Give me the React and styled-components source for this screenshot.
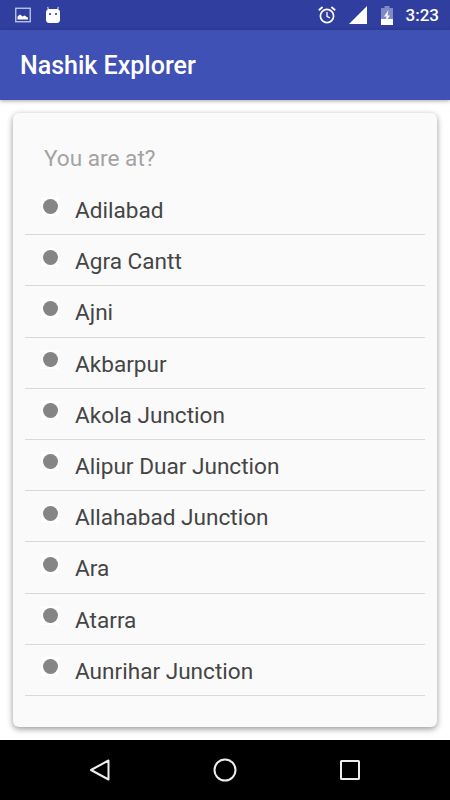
import React from "react";
import styled, { createGlobalStyle } from "styled-components";

const STATIONS = [
  "Adilabad",
  "Agra Cantt",
  "Ajni",
  "Akbarpur",
  "Akola Junction",
  "Alipur Duar Junction",
  "Allahabad Junction",
  "Ara",
  "Atarra",
  "Aunrihar Junction",
];

const App = () => (
  <Screen>
    <GlobalStyle />
    <StatusBar>
      <StatusGroup>
        <svg width="16" height="16" viewBox="0 0 16 16">
          <rect x="0.75" y="1.25" width="14.5" height="13.5" fill="none" stroke="#c5cae9" strokeWidth="1.3" />
          <path d="M2.5 12.5V9.5l2.5-2 2.5 2 2-1 3.5 2.2v1.8z" fill="#fff" />
        </svg>
        <svg width="16" height="18" viewBox="0 0 16 18">
          <path d="M3.5 4L2.7 0.8M12.5 4l.8-3.2" stroke="#c5cae9" strokeWidth="1.2" fill="none" />
          <rect x="1" y="3" width="14" height="14" rx="3.5" fill="#fff" />
          <circle cx="5" cy="8" r="1.1" fill="#303f9f" />
          <circle cx="11" cy="8" r="1.1" fill="#303f9f" />
        </svg>
      </StatusGroup>
      <StatusGroup $right>
        <svg width="20" height="20" viewBox="-1 0 20 20" fill="none" stroke="#fff">
          <circle cx="10" cy="11" r="6.6" strokeWidth="1.7" />
          <path d="M10 7v4.4l3 1.6" strokeWidth="1.3" />
          <path d="M1.8 5.2l3.8-3.2M18.2 5.2l-3.8-3.2" strokeWidth="1.8" />
        </svg>
        <svg width="20" height="20" viewBox="0 0 20 20">
          <path d="M19 1v18H1z" fill="#fff" />
        </svg>
        <svg width="14" height="20" viewBox="0 0 14 20">
          <path d="M1 3h3.5V1h5v2H13v17H1z" fill="#7f89c6" />
          <path d="M1 14h12v6H1z" fill="#fff" />
          <path d="M8.6 5L4 11.5h2.6L5.4 17 10 10.4H7.4z" fill="#fff" />
        </svg>
        <Clock>3:23</Clock>
      </StatusGroup>
    </StatusBar>
    <AppBar>Nashik Explorer</AppBar>
    <Content>
      <Card>
        <Prompt>You are at?</Prompt>
        <StationList>
          {STATIONS.map(name => (
            <StationRow key={name}>
              <DotBox>
                <Dot />
              </DotBox>
              <StationName>{name}</StationName>
            </StationRow>
          ))}
        </StationList>
      </Card>
    </Content>
    <NavBar>
      <svg width="22" height="24" viewBox="0 0 22 24" fill="none" stroke="#eee" strokeWidth="2" strokeLinejoin="round">
        <path d="M19.5 2.5v19L2 12z" />
      </svg>
      <svg width="24" height="24" viewBox="0 0 24 24" fill="none" stroke="#eee" strokeWidth="2">
        <circle cx="12" cy="12" r="10.5" />
      </svg>
      <svg width="22" height="22" viewBox="0 0 22 22" fill="none" stroke="#eee" strokeWidth="2" strokeLinejoin="round">
        <rect x="2" y="2" width="18" height="18" rx="0.5" />
      </svg>
    </NavBar>
  </Screen>
);

const GlobalStyle = createGlobalStyle`
  html, body {
    margin: 0;
    padding: 0;
    background: #fff;
  }
`;

const Screen = styled.div`
  display: flex;
  flex-direction: column;
  width: 450px;
  height: 800px;
  overflow: hidden;
  font-family: Roboto, "Noto Sans", sans-serif;
  background: #fff;
`;

const StatusBar = styled.div`
  display: flex;
  justify-content: space-between;
  align-items: center;
  flex: 0 0 30px;
  padding: 0 11px 0 15px;
  box-sizing: border-box;
  background: #303f9f;
`;

const StatusGroup = styled.div`
  display: flex;
  align-items: center;
  gap: ${props => (props.$right ? "12px" : "14px")};
`;

const Clock = styled.span`
  font-size: 17px;
  font-weight: 500;
  color: #fff;
`;

const AppBar = styled.div`
  position: relative;
  z-index: 1;
  display: flex;
  align-items: center;
  flex: 0 0 70px;
  padding-left: 20px;
  box-sizing: border-box;
  font-size: 25px;
  font-weight: 500;
  color: #fff;
  background: #3f51b5;
  box-shadow: 0 1px 4px rgba(0, 0, 0, 0.35);
`;

const Content = styled.div`
  flex: 1;
  padding: 13px;
  box-sizing: border-box;
  min-height: 0;
`;

const Card = styled.div`
  height: 614px;
  padding: 19px 12px 0;
  box-sizing: border-box;
  border-radius: 6px;
  background: #fafafa;
  box-shadow: 0 2px 6px rgba(0, 0, 0, 0.42);
`;

const Prompt = styled.div`
  padding-left: 19px;
  height: 52px;
  line-height: 54px;
  font-size: 22.6px;
  color: #a3a3a3;
`;

const StationList = styled.div`
  display: flex;
  flex-direction: column;
`;

const StationRow = styled.div`
  display: flex;
  height: 51.2px;
  box-sizing: border-box;
  padding-left: 16px;
  border-bottom: 1px solid #d9d9d9;
`;

const DotBox = styled.div`
  display: flex;
  align-items: center;
  justify-content: center;
  width: 18px;
  height: 19px;
  margin-top: 12.5px;
  background: #fff;
`;

const Dot = styled.div`
  width: 15px;
  height: 15px;
  border-radius: 50%;
  background: #858585;
`;

const StationName = styled.div`
  margin-left: 16px;
  line-height: 50px;
  margin-top: 2px;
  font-size: 22.6px;
  color: #454545;
`;

const NavBar = styled.div`
  display: flex;
  justify-content: space-between;
  align-items: center;
  flex: 0 0 60px;
  padding: 0 89px;
  box-sizing: border-box;
  background: #000;
`;

export default App;
